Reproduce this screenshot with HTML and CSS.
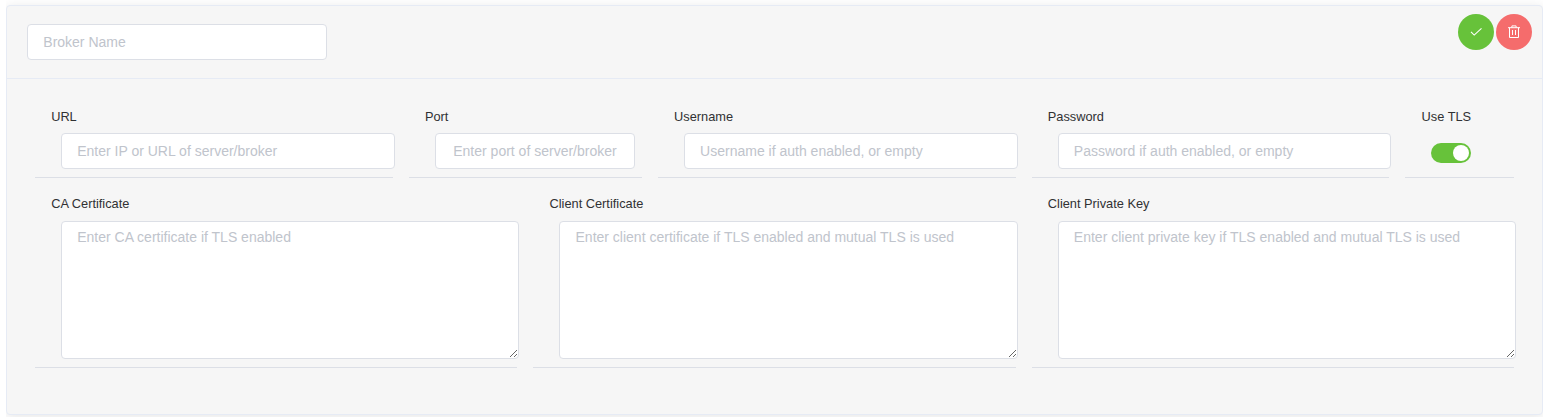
FILE: index.html
```html
<!DOCTYPE html>
<html lang="en">
<head>
<meta charset="utf-8">
<title>Broker settings</title>
<link rel="stylesheet" href="styles.css">
</head>
<body>
<main class="page">
  <section class="card">
    <header class="card-header">
      <input class="input broker-name" type="text" placeholder="Broker Name" aria-label="Broker Name">
      <div class="actions">
        <button class="btn btn-success" aria-label="Save">
          <svg viewBox="0 0 14 14"><path d="M2 6.9 5.2 10.1 12.5 3.4"/></svg>
        </button>
        <button class="btn btn-danger" aria-label="Delete">
          <svg viewBox="0 0 14 14"><path d="M1 2.7H13M2.5 2.7V12.5H11.5V2.7M4.9 2.7V.9H9.1V2.7M5.5 5V10M8.5 5V10"/></svg>
        </button>
      </div>
    </header>
    <div class="card-body">
      <div class="field span-3"><label class="label">URL</label><input class="input" type="text" placeholder="Enter IP or URL of server/broker"></div>
      <div class="field span-2"><label class="label">Port</label><input class="input input-port" type="text" placeholder="Enter port of server/broker"></div>
      <div class="field span-3"><label class="label">Username</label><input class="input" type="text" placeholder="Username if auth enabled, or empty"></div>
      <div class="field span-3"><label class="label">Password</label><input class="input" type="password" placeholder="Password if auth enabled, or empty"></div>
      <div class="field span-1"><label class="label">Use TLS</label><span class="switch" role="switch" aria-checked="true"></span></div>
      <div class="field span-4"><label class="label label-area">CA Certificate</label><textarea class="input textarea" placeholder="Enter CA certificate if TLS enabled"></textarea></div>
      <div class="field span-4"><label class="label label-area">Client Certificate</label><textarea class="input textarea" placeholder="Enter client certificate if TLS enabled and mutual TLS is used"></textarea></div>
      <div class="field span-4"><label class="label label-area">Client Private Key</label><textarea class="input textarea" placeholder="Enter client private key if TLS enabled and mutual TLS is used"></textarea></div>
    </div>
  </section>
</main>
</body>
</html>
```

FILE: styles.css
```css
* {
  box-sizing: border-box;
}

body {
  margin: 0;
  background: #fff;
  color: #303133;
  font-family: "Liberation Sans", Arial, sans-serif;
}

.page {
  height: 417px;
  margin: 0 6px;
  padding-top: 5px;
  overflow: hidden;
}

.card {
  height: 410px;
  border: 1px solid #e6ebf5;
  border-radius: 4px;
  background: #f6f6f6;
  box-shadow: 0 2px 12px 0 rgba(0, 0, 0, 0.1);
}

.card-header {
  display: flex;
  justify-content: space-between;
  align-items: flex-start;
  height: 73px;
  padding: 18px 10px 18px 20px;
  border-bottom: 1px solid #e6ebf5;
}

.input {
  display: block;
  width: calc(100% - 24px);
  height: 36px;
  margin: 0 0 0 26px;
  padding: 0 15px 0 15.2px;
  border: 1px solid #dcdfe6;
  border-radius: 4px;
  background: #fff;
  color: #606266;
  font: 14px "Liberation Sans", Arial, sans-serif;
}

.input::placeholder {
  color: #c0c4cc;
}

.broker-name {
  width: 300px;
  margin: 0;
  padding-left: 15.3px;
}

.input-port {
  width: 200px;
  padding: 0 16px 0 17.5px;
}

.textarea {
  height: 138px;
  padding: 5px 15px 5px 15.2px;
  line-height: 21px;
  resize: vertical;
}

.actions {
  display: flex;
  gap: 2px;
  margin-top: -10px;
}

.btn {
  display: flex;
  align-items: center;
  justify-content: center;
  width: 36px;
  height: 36px;
  padding: 0;
  border: 0;
  border-radius: 50%;
}

.btn svg {
  width: 14px;
  height: 14px;
  fill: none;
  stroke: #fff;
  stroke-width: 1;
}

.btn-success {
  background: #67c23a;
}

.btn-success svg {
  stroke-width: 1.1;
}

.btn-danger {
  background: #f56c6c;
}

.card-body {
  display: grid;
  grid-template-columns: repeat(12, minmax(0, 1fr));
  grid-template-rows: 79px 182px;
  row-gap: 8px;
  column-gap: 16px;
  padding: 20px 28px;
}

.field {
  border-bottom: 1px solid #dcdfe6;
}

.span-1 { grid-column: span 1; }
.span-2 { grid-column: span 2; }
.span-3 { grid-column: span 3; }
.span-4 { grid-column: span 4; }

.label {
  display: block;
  height: 34px;
  padding: 10px 0 0 16.15px;
  font-size: 12.8px;
  line-height: 16px;
  white-space: nowrap;
}

.label-area {
  height: 35px;
}

.switch {
  display: flex;
  justify-content: flex-end;
  width: 40px;
  height: 20px;
  margin: 10px 0 0 26px;
  padding: 2px;
  border-radius: 10px;
  background: #67c23a;
}

.switch::after {
  content: "";
  width: 16px;
  height: 16px;
  border-radius: 50%;
  background: #fff;
}
```
